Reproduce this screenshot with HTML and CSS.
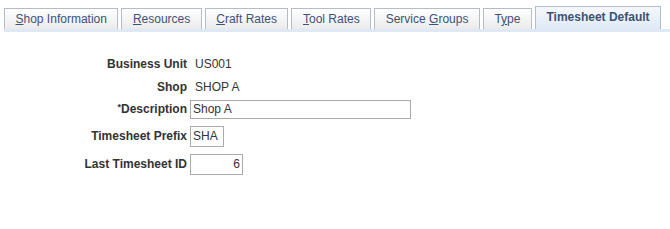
FILE: index.html
```html
<!DOCTYPE html>
<html lang="en">
<head>
    <meta charset="UTF-8">
    <title>Timesheet Default</title>
    <link rel="stylesheet" href="styles.css">
</head>
<body>
    <div class="tabs">
        <div class="tab"><u>S</u>hop Information</div>
        <div class="tab"><u>R</u>esources</div>
        <div class="tab"><u>C</u>raft Rates</div>
        <div class="tab"><u>T</u>ool Rates</div>
        <div class="tab">Service <u>G</u>roups</div>
        <div class="tab">T<u>y</u>pe</div>
        <div class="tab active">Timesheet Default</div>
    </div>
    <div class="tabline"></div>

    <div class="form">
        <div class="lbl">Business Unit</div>
        <div class="val">US001</div>

        <div class="lbl">Shop</div>
        <div class="val">SHOP A</div>

        <div class="lbl"><span class="req">*</span>Description</div>
        <div><input type="text" class="fld desc" value="Shop A"></div>

        <div class="lbl">Timesheet Prefix</div>
        <div><input type="text" class="fld prefix" value="SHA"></div>

        <div class="lbl">Last Timesheet ID</div>
        <div><input type="text" class="fld num" value="6"></div>
    </div>
</body>
</html>
```

FILE: styles.css
```css
body {
    margin: 0;
    background: #fff;
    font-family: "Liberation Sans", Arial, Helvetica, sans-serif;
    font-size: 12px;
    color: #333;
}
.tabs {
    display: flex;
    align-items: flex-end;
    gap: 3px;
    padding: 7px 0 0 4px;
    height: 22px;
}
.tab {
    height: 20px;
    line-height: 21px;
    padding: 0 10.5px;
    border: 1px solid #b2bccb;
    border-bottom: none;
    background: linear-gradient(#fff, #ebebeb);
    color: #3d5277;
    font-size: 12px;
    white-space: nowrap;
}
.tab.active {
    height: 22px;
    line-height: 20px;
    font-weight: bold;
    background: linear-gradient(#f5f8fc, #dfe9f5);
}
.tabline {
    margin-left: 4px;
    height: 3px;
    background: #dfe9f5;
}
.form {
    display: grid;
    grid-template-columns: 187px 1fr;
    column-gap: 3px;
    grid-template-rows: 22px 24px 20px 34px 22px;
    margin-top: 21px;
    align-items: center;
}
.lbl {
    text-align: right;
    font-weight: bold;
    color: #333;
}
.req {
    font-size: 9px;
    vertical-align: 3px;
}
.val {
    padding-left: 5px;
    color: #333;
}
.fld {
    box-sizing: border-box;
    height: 19px;
    margin: 0;
    padding: 0 2px;
    border: 1px solid #aaa;
    font-family: inherit;
    font-size: 12px;
    color: #333;
    background: #fff;
}
.desc {
    width: 221px;
}
.prefix {
    width: 34px;
    height: 21px;
}
.num {
    width: 53px;
    height: 21px;
    text-align: right;
}
```
